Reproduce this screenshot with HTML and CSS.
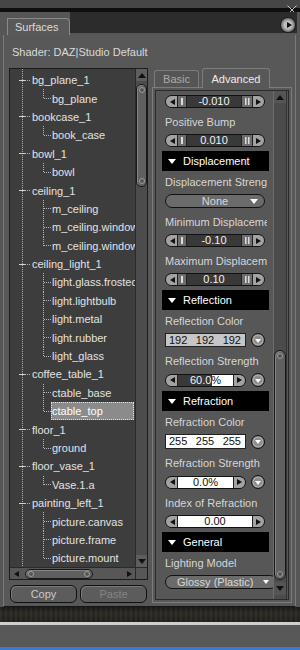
FILE: index.html
```html
<!DOCTYPE html>
<html lang="en">
<head>
    <meta charset="UTF-8">
    <meta name="viewport" content="width=device-width, initial-scale=1.0">
    <title>Surfaces</title>
    <link rel="stylesheet" href="styles.css">
</head>
<body>
    <div class="titlebar">
        <svg class="close" width="10" height="10" viewBox="0 0 10 10"><path d="M0.5 0.5 L9.5 9.5 M9.5 0.5 L0.5 9.5" stroke="#c4c4c4" stroke-width="1" fill="none"/></svg>
    </div>
    <div class="tabrow">
        <div class="tab">Surfaces</div>
        <div class="tabfill"><span class="menu-btn"><span class="tri-r"></span></span></div>
    </div>
    <div class="panel">
        <div class="shader">Shader: DAZ|Studio Default</div>
        <div class="columns">
            <div class="left">
                <div class="tree">
                    <div class="tree-list">
                        <div class="row parent"><span class="minus"></span><span class="hdots"></span><span class="name">bg_plane_1</span></div>
                        <div class="row leaf last"><span class="branch"></span><span class="name">bg_plane</span></div>
                        <div class="row parent"><span class="minus"></span><span class="hdots"></span><span class="name">bookcase_1</span></div>
                        <div class="row leaf last"><span class="branch"></span><span class="name">book_case</span></div>
                        <div class="row parent"><span class="minus"></span><span class="hdots"></span><span class="name">bowl_1</span></div>
                        <div class="row leaf last"><span class="branch"></span><span class="name">bowl</span></div>
                        <div class="row parent"><span class="minus"></span><span class="hdots"></span><span class="name">ceiling_1</span></div>
                        <div class="row leaf"><span class="branch"></span><span class="name">m_ceiling</span></div>
                        <div class="row leaf"><span class="branch"></span><span class="name">m_ceiling.window</span></div>
                        <div class="row leaf last"><span class="branch"></span><span class="name">m_ceiling.window</span></div>
                        <div class="row parent"><span class="minus"></span><span class="hdots"></span><span class="name">ceiling_light_1</span></div>
                        <div class="row leaf"><span class="branch"></span><span class="name">light.glass.frosted</span></div>
                        <div class="row leaf"><span class="branch"></span><span class="name">light.lightbulb</span></div>
                        <div class="row leaf"><span class="branch"></span><span class="name">light.metal</span></div>
                        <div class="row leaf"><span class="branch"></span><span class="name">light.rubber</span></div>
                        <div class="row leaf last"><span class="branch"></span><span class="name">light_glass</span></div>
                        <div class="row parent"><span class="minus"></span><span class="hdots"></span><span class="name">coffee_table_1</span></div>
                        <div class="row leaf"><span class="branch"></span><span class="name">ctable_base</span></div>
                        <div class="row leaf last selected"><span class="branch"></span><span class="name">ctable_top</span></div>
                        <div class="row parent"><span class="minus"></span><span class="hdots"></span><span class="name">floor_1</span></div>
                        <div class="row leaf last"><span class="branch"></span><span class="name">ground</span></div>
                        <div class="row parent"><span class="minus"></span><span class="hdots"></span><span class="name">floor_vase_1</span></div>
                        <div class="row leaf last"><span class="branch"></span><span class="name">Vase.1.a</span></div>
                        <div class="row parent"><span class="minus"></span><span class="hdots"></span><span class="name">painting_left_1</span></div>
                        <div class="row leaf"><span class="branch"></span><span class="name">picture.canvas</span></div>
                        <div class="row leaf"><span class="branch"></span><span class="name">picture.frame</span></div>
                        <div class="row leaf last"><span class="branch"></span><span class="name">picture.mount</span></div>
                    </div>
                    <div class="vscroll">
                        <span class="sbtn"><span class="tri-u"></span></span>
                        <span class="thumb vthumb"><span class="grip"></span><span class="grip"></span></span>
                        <span class="spacer"></span>
                        <span class="sbtn"><span class="tri-dn"></span></span>
                    </div>
                    <div class="hscroll">
                        <span class="hbtn"><span class="tri-l"></span></span>
                        <span class="thumb hthumb"><span class="grip"></span><span class="grip"></span></span>
                        <span class="spacer"></span>
                        <span class="hbtn"><span class="tri-r"></span></span>
                    </div>
                    <div class="corner"></div>
                </div>
                <div class="btns">
                    <button class="btn">Copy</button>
                    <button class="btn disabled">Paste</button>
                </div>
            </div>
            <div class="right">
                <div class="rtabs">
                    <div class="rtab basic">Basic</div>
                    <div class="rtab active">Advanced</div>
                </div>
                <div class="rbox">
                    <div class="rinner">
                        <div class="props">
                            <div class="slider first"><span class="cap cap-l"><span class="tri-l"></span></span><span class="tick"></span><span class="val">-0.010</span><span class="tick tick-2"></span><span class="cap cap-r"><span class="tri-r"></span></span></div>
                            <div class="label">Positive Bump</div>
                            <div class="slider"><span class="cap cap-l"><span class="tri-l"></span></span><span class="tick"></span><span class="val">0.010</span><span class="tick tick-2"></span><span class="cap cap-r"><span class="tri-r"></span></span></div>
                            <div class="header"><span class="tri-dw"></span>Displacement</div>
                            <div class="label">Displacement Strength</div>
                            <div class="dropdown"><span class="dd-text">None</span><span class="tri-dw"></span></div>
                            <div class="label">Minimum Displacement</div>
                            <div class="slider"><span class="cap cap-l"><span class="tri-l"></span></span><span class="tick"></span><span class="val">-0.10</span><span class="tick tick-2"></span><span class="cap cap-r"><span class="tri-r"></span></span></div>
                            <div class="label">Maximum Displacement</div>
                            <div class="slider"><span class="cap cap-l"><span class="tri-l"></span></span><span class="tick"></span><span class="val">0.10</span><span class="tick tick-2"></span><span class="cap cap-r"><span class="tri-r"></span></span></div>
                            <div class="header"><span class="tri-dw"></span>Reflection</div>
                            <div class="label">Reflection Color</div>
                            <div class="ctl-row">
                                <div class="color-field"><span>192</span><span>192</span><span>192</span></div>
                                <span class="round"><span class="tri-dw small"></span></span>
                            </div>
                            <div class="label">Reflection Strength</div>
                            <div class="ctl-row">
                                <div class="slider short"><span class="cap cap-l"><span class="tri-l"></span></span><span class="val split">60.0<span class="pct">%</span></span><span class="cap cap-r"><span class="tri-r"></span></span></div>
                                <span class="round"><span class="tri-dw small"></span></span>
                            </div>
                            <div class="header"><span class="tri-dw"></span>Refraction</div>
                            <div class="label">Refraction Color</div>
                            <div class="ctl-row">
                                <div class="color-field white"><span>255</span><span>255</span><span>255</span></div>
                                <span class="round"><span class="tri-dw small"></span></span>
                            </div>
                            <div class="label">Refraction Strength</div>
                            <div class="ctl-row">
                                <div class="slider short white"><span class="cap cap-l"><span class="tri-l"></span></span><span class="val">0.0%</span><span class="cap cap-r"><span class="tri-r"></span></span></div>
                                <span class="round"><span class="tri-dw small"></span></span>
                            </div>
                            <div class="label">Index of Refraction</div>
                            <div class="slider white"><span class="cap cap-l"><span class="tri-l"></span></span><span class="val">0.00</span><span class="cap cap-r"><span class="tri-r"></span></span></div>
                            <div class="header"><span class="tri-dw"></span>General</div>
                            <div class="label">Lighting Model</div>
                            <div class="dropdown wide"><span class="dd-text">Glossy (Plastic)</span><span class="tri-dw small"></span></div>
                        </div>
                        <div class="vscroll-r">
                            <span class="sbtn"><span class="tri-u"></span></span>
                            <span class="spacer"></span>
                            <span class="thumb rthumb"><span class="grip"></span><span class="grip"></span></span>
                            <span class="sbtn down"><span class="tri-dn"></span></span>
                        </div>
                    </div>
                </div>
            </div>
        </div>
    </div>
    <div class="footer-dark"></div>
    <div class="footer-line"></div>
    <div class="footer-gray"></div>
    <div class="footer-blue"></div>
</body>
</html>
```

FILE: styles.css
```css
* {
    margin: 0;
    padding: 0;
    box-sizing: border-box;
}
body {
    width: 300px;
    height: 650px;
    overflow: hidden;
    background: #565656;
    font-family: 'Liberation Sans', Arial, sans-serif;
    font-size: 11px;
    color: #e0e0e0;
}

/* top strip */
.titlebar {
    height: 12px;
    background: linear-gradient(to bottom, #464646 0 8px, #0f0f0f 8px 12px);
    display: flex;
    justify-content: flex-end;
    padding: 5px 3px 0 0;
}
.close {
    display: block;
    flex: none;
}
.tabrow {
    height: 23px;
    display: flex;
}
.tab {
    margin: 6px 0 0 7px;
    width: 63px;
    height: 17px;
    background: #595959;
    border: 1px solid #8a8a8a;
    border-bottom: none;
    border-radius: 0 4px 0 0;
    color: #dcdcdc;
    padding-left: 7px;
    line-height: 16px;
}
.tabfill {
    flex: 1;
    height: 21px;
    margin-right: 3px;
    background: #2c2c2c;
    display: flex;
}
.menu-btn {
    margin: 5px 1px 0 auto;
    width: 16px;
    height: 16px;
    border-radius: 50%;
    border: 1px solid #1a1a1a;
    background: radial-gradient(circle, #bdbdbd 0 4px, #9a9a9a 5px, #777 7px);
    display: flex;
    align-items: center;
    justify-content: center;
    padding-left: 2px;
}

/* triangles */
.tri-r {
    width: 0;
    height: 0;
    border-top: 3.5px solid transparent;
    border-bottom: 3.5px solid transparent;
    border-left: 5px solid #111;
}
.tri-l {
    width: 0;
    height: 0;
    border-top: 3.5px solid transparent;
    border-bottom: 3.5px solid transparent;
    border-right: 5px solid #111;
}
.tri-u {
    width: 0;
    height: 0;
    border-left: 4px solid transparent;
    border-right: 4px solid transparent;
    border-bottom: 5px solid #111;
}
.tri-dn {
    width: 0;
    height: 0;
    border-left: 4px solid transparent;
    border-right: 4px solid transparent;
    border-top: 5px solid #111;
}
.tri-dw {
    flex: none;
    width: 0;
    height: 0;
    border-left: 4px solid transparent;
    border-right: 4px solid transparent;
    border-top: 5px solid #fff;
}
.tri-dw.small {
    border-left-width: 3px;
    border-right-width: 3px;
    border-top-width: 4px;
}

/* main panel */
.panel {
    margin-left: 3px;
    width: 293px;
    height: 572px;
    background: #585858;
    border-left: 1px solid #7a7a7a;
    border-right: 1px solid #7a7a7a;
    border-bottom: 1px solid #151515;
    padding: 10px 3px 0 5px;
}
.shader {
    height: 14px;
    line-height: 14px;
    padding-left: 3px;
    color: #dadada;
    margin-bottom: 9px;
    white-space: nowrap;
}
.columns {
    display: flex;
    gap: 4px;
}
.left {
    width: 139px;
}

/* tree */
.tree {
    height: 512px;
    border: 1px solid #1c1c1c;
    background: #3d3d3d;
    display: grid;
    grid-template-columns: 1fr 12px;
    grid-template-rows: 1fr 12px;
}
.tree-list {
    overflow: hidden;
    padding-top: 2px;
    background: repeating-linear-gradient(to bottom, #b0b0b0 0 1px, transparent 1px 2px) 12px 0 / 1px 100% no-repeat;
}
.row {
    height: 18.4px;
    display: flex;
    align-items: center;
    white-space: nowrap;
    color: #e2e2e2;
}
.parent {
    padding-left: 9px;
}
.minus {
    flex: none;
    width: 6px;
    height: 1px;
    background: #d4d4d4;
}
.hdots {
    flex: none;
    width: 6px;
    height: 1px;
    margin-right: 1px;
    background: repeating-linear-gradient(to right, #b5b5b5 0 1px, transparent 1px 2px);
}
.leaf {
    padding-left: 33px;
    align-items: stretch;
}
.branch {
    flex: none;
    width: 9px;
    background:
        repeating-linear-gradient(to right, #b5b5b5 0 1px, transparent 1px 2px) 1px 50% / 8px 1px no-repeat,
        repeating-linear-gradient(to bottom, #b5b5b5 0 1px, transparent 1px 2px) 0 0 / 1px 100% no-repeat;
}
.leaf.last .branch {
    background:
        repeating-linear-gradient(to right, #b5b5b5 0 1px, transparent 1px 2px) 1px 50% / 8px 1px no-repeat,
        repeating-linear-gradient(to bottom, #b5b5b5 0 1px, transparent 1px 2px) 0 0 / 1px 50% no-repeat;
}
.name {
    display: flex;
    align-items: center;
}
.selected .name {
    flex: 1;
    margin-right: 1px;
    background: #8b8b8b;
    border: 1px dotted #e4e4e4;
    margin-left: -1px;
    color: #fff;
}

/* scrollbars */
.vscroll {
    display: flex;
    flex-direction: column;
    background: #4c4c4c;
    border-left: 1px solid #2a2a2a;
}
.sbtn {
    flex: none;
    height: 12px;
    display: flex;
    align-items: center;
    justify-content: center;
    background: #5e5e5e;
}
.spacer {
    flex: 1;
}
.thumb {
    display: flex;
    justify-content: space-between;
    align-items: center;
    border: 1px solid #181818;
    background: #606060;
    box-shadow: inset 1px 1px #858585;
}
.vthumb {
    flex: none;
    height: 103px;
    margin: 3px 0 0;
    flex-direction: column;
    border-radius: 5px;
    padding: 2px 0;
}
.grip {
    width: 6px;
    height: 6px;
    border-radius: 50%;
    border: 1px solid #9c9c9c;
    background: #555;
}
.hscroll {
    display: flex;
    align-items: center;
    background: #575757;
    border-top: 1px solid #2a2a2a;
}
.hbtn {
    flex: none;
    width: 12px;
    height: 100%;
    display: flex;
    align-items: center;
    justify-content: center;
}
.hthumb {
    flex: none;
    width: 68px;
    height: 10px;
    margin-left: 3px;
    border-radius: 5px;
    padding: 0 2px;
}
.corner {
    background: #575757;
    border-top: 1px solid #2a2a2a;
    border-left: 1px solid #2a2a2a;
}

.btns {
    display: flex;
    gap: 3px;
    padding: 0 1px;
    margin-top: 5px;
}
.btn {
    width: 67px;
    height: 18px;
    border: 1px solid #111;
    border-radius: 6px;
    background: #5c5c5c;
    color: #cacaca;
    font: inherit;
    box-shadow: inset 1px 1px #7a7a7a;
}
.btn.disabled {
    color: #858585;
}

/* right side */
.right {
    width: 140px;
    display: flex;
    flex-direction: column;
}
.rtabs {
    height: 20px;
    display: flex;
    align-items: flex-end;
    gap: 3px;
    padding-left: 2px;
    border-bottom: 1px solid #7c7c7c;
}
.rtab {
    flex: none;
    height: 17px;
    line-height: 16px;
    text-align: center;
    border: 1px solid #7c7c7c;
    border-bottom: none;
    border-radius: 3px 3px 0 0;
    color: #ababab;
    background: #555;
}
.rtab.basic {
    width: 45px;
}
.rtab.active {
    width: 68px;
    height: 20px;
    line-height: 20px;
    margin-bottom: -1px;
    color: #ececec;
    background: #585858;
}
.rbox {
    flex: 1;
    border: 1px solid #7c7c7c;
    border-top: none;
    padding: 2px;
    display: flex;
}
.rinner {
    flex: 1;
    display: flex;
    border: 1px solid #2a2a2a;
    background: #575757;
    overflow: hidden;
}
.props {
    flex: none;
    width: 117px;
    padding: 4px 0 0 6px;
    overflow: hidden;
}
.vscroll-r {
    flex: none;
    width: 14px;
    display: flex;
    flex-direction: column;
    background: #4b4b4b;
    border-left: 1px solid #6c6c6c;
    border-right: 1px solid #333;
    padding-bottom: 4px;
}
.vscroll-r .sbtn {
    background: #555;
}
.vscroll-r .sbtn.down {
    height: 13px;
    margin-top: 2px;
}
.rthumb {
    flex: none;
    height: 230px;
    flex-direction: column;
    border-radius: 6px;
    padding: 2px 0;
}

.label {
    margin: 7px 0 0 3px;
    width: 102px;
    height: 14px;
    line-height: 14px;
    white-space: nowrap;
    overflow: hidden;
    color: #d6d6d6;
}
.header + .label {
    margin-top: 4px;
}
.header {
    margin: 4px 4px 0 0;
    height: 20px;
    background: #000;
    color: #fff;
    display: flex;
    align-items: center;
    gap: 7px;
    padding-left: 6px;
    white-space: nowrap;
}

.slider {
    margin: 5px 0 0 3px;
    width: 100px;
    height: 13px;
    border: 1px solid #111;
    border-radius: 7px;
    display: flex;
    overflow: hidden;
    background: #393939;
}
.slider.first {
    margin-top: 0;
}
.cap {
    flex: none;
    width: 12px;
    background: #a2a2a2;
    display: flex;
    align-items: center;
    justify-content: center;
}
.cap-l {
    border-right: 1px solid #222;
    padding-left: 1px;
}
.cap-r {
    border-left: 1px solid #222;
    padding-right: 1px;
}
.tick {
    flex: none;
    width: 9px;
    border-right: 1px solid #222;
    background: linear-gradient(#dcdcdc, #dcdcdc) 50% 50% / 2px 7px no-repeat, #6d6d6d;
}
.tick-2 {
    width: 11px;
    border-right: none;
    border-left: 1px solid #222;
    background:
        linear-gradient(#dcdcdc, #dcdcdc) 3px 50% / 1.5px 7px no-repeat,
        linear-gradient(#dcdcdc, #dcdcdc) 6px 50% / 1.5px 7px no-repeat,
        #6d6d6d;
}
.val {
    flex: 1;
    text-align: center;
    line-height: 11px;
    color: #f2f2f2;
    white-space: nowrap;
}
.slider.white .val {
    background: #fff;
    color: #111;
}
.val.split {
    background: linear-gradient(to right, #393939 0 61%, #fff 61%);
}
.pct {
    color: #111;
}
.ctl-row {
    margin: 5px 0 0 3px;
    width: 100px;
    display: flex;
    align-items: center;
    gap: 5px;
}
.slider.short {
    margin: 0;
    width: 82px;
}
.color-field {
    width: 82px;
    height: 14px;
    border: 1px solid #222;
    background: #c6c6c6;
    color: #111;
    display: flex;
    justify-content: space-between;
    padding: 0 4px 0 3px;
    line-height: 12px;
}
.color-field.white {
    background: #fff;
    height: 15px;
    line-height: 13px;
}
.round {
    flex: none;
    width: 14px;
    height: 14px;
    border-radius: 50%;
    border: 1px solid #111;
    background: radial-gradient(circle, #8c8c8c 0 4px, #b4b4b4 5px, #747474 6px);
    display: flex;
    align-items: center;
    justify-content: center;
    padding-top: 1px;
}

.dropdown {
    margin: 5px 0 0 3px;
    width: 100px;
    height: 14px;
    border: 1px solid #111;
    border-radius: 7px;
    background: #6b6b6b;
    color: #d8d8d8;
    display: flex;
    align-items: center;
    padding: 0 6px 0 14px;
    white-space: nowrap;
}
.dd-text {
    flex: 1;
    text-align: center;
    line-height: 12px;
}
.dropdown.wide {
    width: 112px;
    padding: 0 7px 0 11px;
}
.dropdown.wide .dd-text {
    text-align: left;
}

/* bottom of window */
.footer-dark {
    height: 15px;
    background:
        repeating-linear-gradient(90deg, rgba(255, 255, 255, 0.04) 0 2px, transparent 2px 5px),
        linear-gradient(to bottom, #1a1816, #2c2824 40%, #231f1b);
}
.footer-line {
    height: 3px;
    background: #cfcfcf;
}
.footer-gray {
    height: 22px;
    background: #585858;
}
.footer-blue {
    height: 3px;
    background: #3b79d4;
}
```
